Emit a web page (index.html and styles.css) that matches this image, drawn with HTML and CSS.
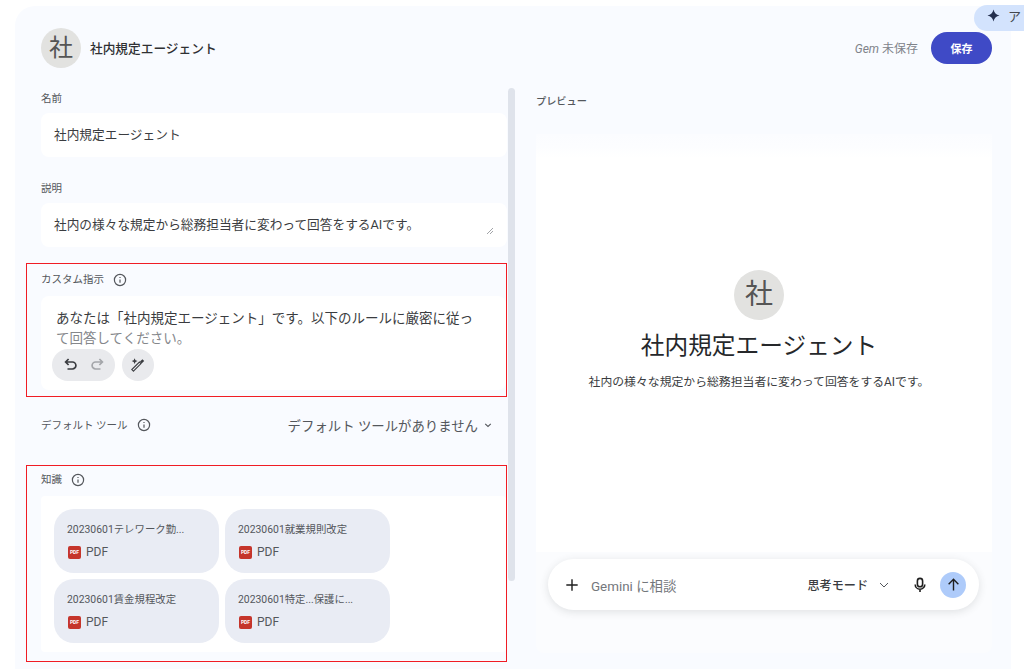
FILE: index.html
```html
<!DOCTYPE html>
<html lang="ja">
<head>
  <meta charset="UTF-8" />
  <title>社内規定エージェント</title>
  <link rel="stylesheet" href="styles.css">
</head>
<body>
  <div class="panel">
    <header class="top">
      <div class="avatar">社</div>
      <div class="gem-name">社内規定エージェント</div>
      <div class="status"><i>Gem</i> 未保存</div>
      <button class="save-btn">保存</button>
    </header>

    <div class="columns">
      <div class="form-col">
        <div class="form">
          <div class="block">
            <div class="label">名前</div>
            <div class="field single">社内規定エージェント</div>
          </div>

          <div class="block">
            <div class="label">説明</div>
            <div class="field single">
              社内の様々な規定から総務担当者に変わって回答をするAIです。
              <svg class="grip" viewBox="0 0 8 8"><path d="M7 1 1 7M7 4 4 7" /></svg>
            </div>
          </div>

          <section class="marked custom">
            <div class="label with-info">
              カスタム指示
              <svg class="info" viewBox="0 0 14 14"><circle cx="7" cy="7" r="5.6" /><path d="M7 6.4v3.4M7 4v1" /></svg>
            </div>
            <div class="field prompt">
              <p>あなたは「社内規定エージェント」です。以下のルールに厳密に従っ</p>
              <p class="faded">て回答してください。</p>
              <div class="tools">
                <div class="tool-pill">
                  <svg viewBox="0 0 16 16"><path d="M5.6 2 2.600 5l3 3M3 5h6.400a3.500 3.500 0 0 1 0 7H4.500" /></svg>
                  <svg class="off" viewBox="0 0 16 16"><path d="M10.400 2l3 3-3 3M13 5H6.600a3.500 3.500 0 0 0 0 7h4.900" /></svg>
                </div>
                <div class="tool-round">
                  <svg viewBox="0 0 16 16"><path class="pen" d="M3.400 14.200 1.800 12.600 9.400 5 11 6.600z" /><path class="fill" d="M10 4.400 12.400 2.200 14.200 4 11.600 6.400z" /><path class="fill" d="M4.600 1.200l.9 2 2 .9-2 .9-.9 2-.9-2-2-.9 2-.9z" /></svg>
                </div>
              </div>
            </div>
          </section>

          <div class="default-tool">
            <div class="label with-info">
              デフォルト ツール
              <svg class="info" viewBox="0 0 14 14"><circle cx="7" cy="7" r="5.6" /><path d="M7 6.4v3.4M7 4v1" /></svg>
            </div>
            <div class="tool-select">
              デフォルト ツールがありません
              <svg viewBox="0 0 8 8"><path d="M1.200 2.800 4 5.400l2.800-2.600" /></svg>
            </div>
          </div>

          <section class="marked knowledge">
            <div class="label with-info">
              知識
              <svg class="info" viewBox="0 0 14 14"><circle cx="7" cy="7" r="5.6" /><path d="M7 6.4v3.4M7 4v1" /></svg>
            </div>
            <div class="field files">
              <div class="file">
                <div class="file-name">20230601テレワーク勤...</div>
                <div class="file-type"><span class="pdf">PDF</span>PDF</div>
              </div>
              <div class="file">
                <div class="file-name">20230601就業規則改定</div>
                <div class="file-type"><span class="pdf">PDF</span>PDF</div>
              </div>
              <div class="file">
                <div class="file-name">20230601賃金規程改定</div>
                <div class="file-type"><span class="pdf">PDF</span>PDF</div>
              </div>
              <div class="file">
                <div class="file-name">20230601特定...保護に...</div>
                <div class="file-type"><span class="pdf">PDF</span>PDF</div>
              </div>
            </div>
          </section>
        </div>
        <div class="scrollbar"></div>
      </div>

      <div class="preview-col">
        <div class="preview-label">プレビュー</div>
        <div class="preview">
          <div class="preview-body">
            <div class="avatar big">社</div>
            <h1>社内規定エージェント</h1>
            <p>社内の様々な規定から総務担当者に変わって回答をするAIです。</p>
          </div>
          <div class="chat-wrap">
            <div class="chat">
              <svg class="plus" viewBox="0 0 16 16"><path d="M8 1.500v13M1.500 8h13" /></svg>
              <span class="placeholder">Gemini に相談</span>
              <span class="mode">思考モード</span>
              <svg class="mode-arrow" viewBox="0 0 10 10"><path d="M1 3l4 4 4-4" /></svg>
              <svg class="mic" viewBox="0 0 16 16"><rect x="5.400" y="1.400" width="5.200" height="8.400" rx="2.600" /><path d="M3.200 7.400a4.800 4.800 0 0 0 9.600 0M8 12.200v2.800" /></svg>
              <div class="send"><svg viewBox="0 0 16 16"><path d="M8 14.500V2.500M2.800 7.700 8 2.500l5.200 5.200" /></svg></div>
            </div>
          </div>
        </div>
      </div>
    </div>
  </div>

  <div class="assistant-tab">
    <svg viewBox="0 0 14 14"><path d="M7 .5C7.800 4.200 9.800 6.200 13.500 7 9.800 7.800 7.800 9.800 7 13.500 6.200 9.800 4.200 7.800.5 7 4.200 6.200 6.200 4.200 7 .5z" /></svg>
    ア
  </div>
</body>
</html>
```

FILE: styles.css
```css
* {
  box-sizing: border-box;
}
html, body {
  height: 669px;
  overflow: hidden;
}
body {
  margin: 0;
  padding: 6px 13px 0 15px;
  background-color: #fff;
  color: #2f3033;
  font-family: Roboto, "Noto Sans CJK JP", sans-serif;
  font-size: 13px;
}
svg {
  display: block;
  fill: none;
  stroke: currentColor;
}
.panel {
  height: 663px;
  padding: 22px 19px 0 26px;
  background-color: #f9fbff;
  border-top-left-radius: 20px;
}
.top {
  display: flex;
  align-items: center;
  height: 40px;
}
.avatar {
  flex: none;
  width: 40px;
  height: 40px;
  border-radius: 50%;
  background-color: #e2e2e0;
  color: #555;
  font-size: 24px;
  line-height: 40px;
  text-align: center;
}
.avatar.big {
  width: 50px;
  height: 50px;
  font-size: 28px;
  line-height: 50px;
}
.gem-name {
  margin: 0 0 2px 9px;
  font-size: 12.7px;
  font-weight: 500;
  color: #2f3033;
}
.status {
  margin: 0 0 2px auto;
  font-size: 12px;
  color: #80838a;
}
.save-btn {
  width: 61px;
  height: 32px;
  margin-left: 13px;
  border: none;
  border-radius: 16px;
  background-color: #3f4ac6;
  color: #fff;
  font-family: inherit;
  font-size: 11px;
  font-weight: 700;
}
.columns {
  display: flex;
  margin-top: 20px;
}
.form-col {
  display: flex;
  flex: none;
  width: 474px;
}
.form {
  flex: none;
  width: 466px;
}
.scrollbar {
  flex: none;
  width: 7px;
  height: 493px;
  margin-left: 1px;
  border-radius: 4px;
  background-color: #dfe3eb;
}
.block {
  height: 82px;
}
.block:first-child {
  height: 93px;
  padding-top: 3px;
}
.label {
  height: 15px;
  font-size: 10.5px;
  line-height: 15px;
  color: #54575c;
}
.with-info {
  display: flex;
  align-items: center;
  gap: 9px;
}
.info {
  width: 14px;
  height: 14px;
  stroke: #54575c;
  stroke-width: 1.2;
}
.field {
  background-color: #fff;
  border-radius: 8px;
}
.single {
  position: relative;
  height: 44px;
  margin-top: 7px;
  padding-left: 13px;
  font-size: 12.7px;
  line-height: 44px;
  color: #3a3c40;
}
.grip {
  position: absolute;
  right: 13px;
  bottom: 12px;
  width: 8px;
  height: 8px;
  stroke: #8a8d92;
  stroke-width: 0.8;
}
.marked {
  width: 481px;
  margin-left: -15px;
  padding-left: 14px;
  border: 1px solid #f01c24;
}
.custom {
  height: 134px;
  padding-top: 8px;
}
.prompt {
  height: 94px;
  margin-top: 9px;
  padding: 12px 0 0 15px;
}
.prompt p {
  margin: 0;
  font-size: 13.5px;
  line-height: 20px;
  white-space: nowrap;
  color: #3a3c40;
}
.prompt .faded {
  color: #85878b;
}
.tools {
  display: flex;
  gap: 7px;
  margin: 1px 0 0 -4px;
}
.tool-pill, .tool-round {
  display: flex;
  align-items: center;
  height: 32px;
  border-radius: 16px;
  background-color: #e9eaed;
  color: #3a3c40;
}
.tool-pill {
  justify-content: center;
  gap: 10px;
  width: 63px;
}
.tool-round {
  justify-content: center;
  width: 32px;
}
.tools svg {
  width: 16px;
  height: 16px;
  stroke-width: 1.7;
}
.tools .off {
  color: #a4a6aa;
}
.tools .pen {
  stroke-width: 1.1;
}
.tools .fill {
  fill: currentColor;
  stroke: none;
}
.default-tool {
  display: flex;
  align-items: center;
  justify-content: space-between;
  height: 68px;
  padding-bottom: 12px;
}
.tool-select {
  display: flex;
  align-items: center;
  gap: 6px;
  margin-right: 15px;
  font-size: 13.4px;
  color: #54575c;
}
.tool-select svg {
  width: 8px;
  height: 8px;
  stroke-width: 1.1;
}
.knowledge {
  height: 197px;
  padding-top: 6px;
}
.files {
  display: grid;
  grid-template-columns: 165px 165px;
  grid-auto-rows: 64px;
  gap: 6px;
  height: 156px;
  margin-top: 9px;
  padding: 13px 0 0 13px;
  border-radius: 4px;
}
.file {
  padding: 13px 0 0 13px;
  border-radius: 20px;
  background-color: #e9ecf4;
  color: #54575c;
}
.file-name {
  font-size: 10.4px;
  line-height: 16px;
}
.file-type {
  display: flex;
  align-items: center;
  gap: 5px;
  margin-top: 7px;
  font-size: 12px;
  line-height: 14px;
}
.pdf {
  width: 13px;
  height: 13px;
  margin-left: 1px;
  border-radius: 2px;
  background-color: #c5352b;
  color: #fff;
  font-size: 5px;
  font-weight: 700;
  line-height: 13px;
  text-align: center;
}
.preview-col {
  flex: 1;
  margin-left: 21px;
}
.preview-label {
  height: 46px;
  padding-top: 6px;
  font-size: 10.2px;
  font-weight: 500;
  line-height: 15px;
  color: #54575c;
}
.preview {
  height: 519px;
  background-color: #fbfcfe;
  border-radius: 8px;
}
.preview-body {
  height: 418px;
  padding: 136px 10px 0 0;
  background: linear-gradient(#fbfcff 0, #fcfdff 12px, #fff 24px);
  text-align: center;
}
.preview-body .avatar {
  margin: 0 auto;
}
.preview-body h1 {
  margin: 9px 0 0;
  font-size: 23.7px;
  font-weight: 400;
  line-height: 34px;
  color: #26282b;
}
.preview-body p {
  margin: 11px 0 0;
  font-size: 11.85px;
  line-height: 16px;
  color: #3a3c40;
}
.chat-wrap {
  padding: 7px 13px 0 12px;
}
.chat {
  display: flex;
  align-items: center;
  height: 51px;
  padding: 0 13px 0 17px;
  border-radius: 26px;
  background-color: #fff;
  box-shadow: 0 2px 8px rgba(60, 64, 67, 0.14);
}
.plus {
  width: 14px;
  height: 14px;
  stroke: #1f1f1f;
  stroke-width: 1.6;
}
.placeholder {
  margin-left: 12px;
  font-size: 13.4px;
  color: #74777c;
}
.mode {
  margin-left: auto;
  font-size: 12.1px;
  font-weight: 500;
  color: #3a3c40;
}
.mode-arrow {
  width: 10px;
  height: 10px;
  margin-left: 11px;
  stroke: #54575c;
  stroke-width: 1;
}
.mic {
  width: 16px;
  height: 16px;
  margin-left: 23px;
  stroke: #1f1f1f;
  stroke-width: 1.6;
}
.send {
  display: flex;
  align-items: center;
  justify-content: center;
  width: 26px;
  height: 26px;
  margin-left: 12px;
  border-radius: 50%;
  background-color: #aecbfa;
}
.send svg {
  width: 15px;
  height: 15px;
  stroke: #1f1f1f;
  stroke-width: 1.5;
}
.assistant-tab {
  position: absolute;
  top: 5px;
  left: 974px;
  display: flex;
  align-items: center;
  gap: 8px;
  width: 50px;
  height: 26px;
  padding: 0 0 5px 13px;
  border-radius: 13px 0 0 13px;
  background-color: #d3e3fd;
  color: #44474c;
  font-size: 13px;
  overflow: hidden;
}
.assistant-tab svg {
  flex: none;
  width: 13px;
  height: 13px;
  fill: #24304f;
  stroke: none;
}
```
